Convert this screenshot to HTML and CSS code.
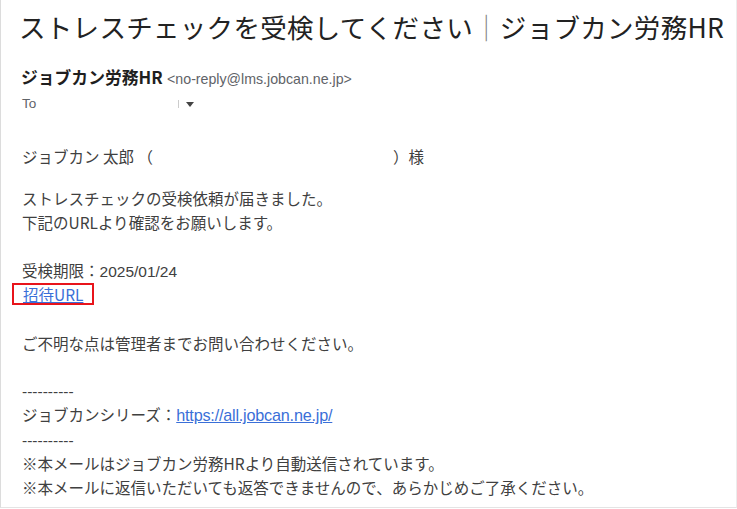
FILE: index.html
```html
<!DOCTYPE html>
<html lang="ja">
<head>
  <meta charset="UTF-8" />
  <meta name="viewport" content="width=device-width, initial-scale=1.0" />
  <title>ストレスチェックを受検してください</title>
  <link rel="stylesheet" href="styles.css">
</head>
<body>
  <div class="mail">
    <h1 class="subject">ストレスチェックを受検してください<span class="bar">｜</span>ジョブカン労務HR</h1>

    <div class="sender">
      <span class="sender-name">ジョブカン労務HR</span>
      <span class="sender-addr">&lt;no-reply@lms.jobcan.ne.jp&gt;</span>
    </div>
    <div class="to">
      <span>To</span>
      <span class="to-blank"></span>
      <span class="to-tick"></span>
      <span class="caret"></span>
    </div>

    <div class="body">
      <p class="greet">ジョブカン 太郎 （<span class="redacted"></span>）様</p>

      <p class="p-request">ストレスチェックの受検依頼が届きました。<br>下記のURLより確認をお願いします。</p>

      <p class="p-deadline">受検期限：<span class="num">2025/01/24</span><br>
        <span class="boxed"><a href="#">招待URL</a></span></p>

      <p class="p-contact">ご不明な点は管理者までお問い合わせください。</p>

      <p class="p-footer">
        <span class="num">----------</span><br>
        ジョブカンシリーズ：<a class="url" href="#">https://all.jobcan.ne.jp/</a><br>
        <span class="num">----------</span><br>
        ※本メールはジョブカン労務HRより自動送信されています。<br>
        ※本メールに返信いただいても返答できませんので、あらかじめご了承ください。
      </p>
    </div>
  </div>
</body>
</html>
```

FILE: styles.css
```css
body {
  margin: 0;
  background: #fff;
  font-family: "Liberation Sans", "Noto Sans CJK JP", sans-serif;
}
.mail {
  box-sizing: border-box;
  height: 508px;
  border-left: 1px solid #dcdcdc;
  border-right: 1px solid #ececec;
  border-bottom: 1px solid #e4e4e4;
  padding: 0 0 0 18px;
  overflow: hidden;
}
.subject {
  margin: 0;
  padding-top: 9px;
  font-family: "Noto Sans CJK JP", sans-serif;
  font-weight: 400;
  font-size: 26.5px;
  line-height: 36px;
  color: #222;
  letter-spacing: 0.3px;
}
.subject .bar {
  color: #888;
}
.sender {
  margin-top: 22px;
  line-height: 20px;
  padding-left: 2px;
}
.sender-name {
  font-family: "Noto Sans CJK JP", sans-serif;
  font-weight: 700;
  font-size: 16.8px;
  color: #1f1f1f;
}
.sender-addr {
  font-size: 14.2px;
  color: #5f6368;
}
.to {
  display: flex;
  align-items: center;
  margin-top: 6px;
  padding-left: 3px;
  font-size: 13.5px;
  color: #5f6368;
  line-height: 18px;
}
.to-blank {
  width: 142px;
}
.to-tick {
  width: 1px;
  height: 8px;
  background: #ccc;
}
.caret {
  margin-left: 7px;
  width: 0;
  height: 0;
  border-left: 4px solid transparent;
  border-right: 4px solid transparent;
  border-top: 5px solid #444;
}
.body {
  padding-left: 3px;
  font-family: "Noto Sans CJK JP", sans-serif;
  font-size: 15.5px;
  line-height: 24.5px;
  color: #404040;
}
.body p {
  margin: 0;
}
.num {
  font-family: "Liberation Sans", sans-serif;
  line-height: 1;
}
.greet {
  margin-top: 31px !important;
}
.redacted {
  display: inline-block;
  width: 240px;
}
.p-request {
  margin-top: 17px !important;
}
.p-deadline {
  margin-top: 23px !important;
}
.boxed {
  display: inline-block;
  margin-left: -10px;
  padding: 0 9px;
  border: 2px solid #e8141b;
  line-height: 18px;
}
.body a {
  color: #3a6fd8;
  text-decoration: underline;
}
.p-contact {
  margin-top: 24px !important;
}
.p-footer {
  margin-top: 23px !important;
  line-height: 24.3px;
}
.url {
  font-family: "Liberation Sans", sans-serif;
  font-size: 16.2px;
  line-height: 1;
  letter-spacing: -0.2px;
}
```
